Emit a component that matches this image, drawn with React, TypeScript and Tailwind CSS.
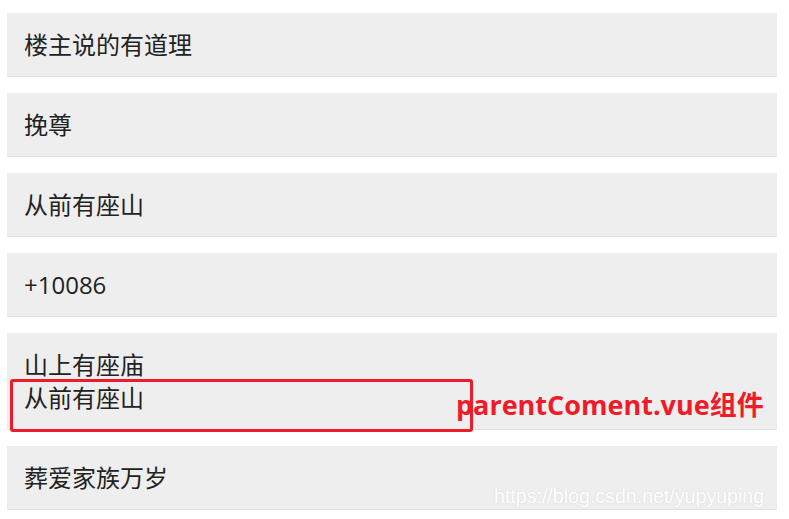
import React from 'react';

const comments: string[][] = [
  ['楼主说的有道理'],
  ['挽尊'],
  ['从前有座山'],
  ['+10086'],
  ['山上有座庙', '从前有座山'],
  ['葬爱家族万岁'],
];

const font = { fontFamily: '"Open Sans", "Noto Sans CJK SC", sans-serif' };

const App: React.FC = () => {
  return (
    <div className="relative w-[789px] h-[519px] bg-white overflow-hidden" style={font}>
      <div className="flex flex-col gap-4 pt-[13px] pl-[7px] w-[777px]">
        {comments.map((lines, i) => (
          <div
            key={i}
            className="bg-[#eeeeee] border-b border-[#e2e2e2] pl-[17px] py-[15px] text-[24px] leading-[33px] text-[#222]"
          >
            {lines.map((l, j) => (
              <div key={j}>{l}</div>
            ))}
          </div>
        ))}
      </div>

      {/* annotation */}
      <div className="absolute left-[10px] top-[379px] w-[463px] h-[53px] border-[3px] border-[#ee1c2a] rounded-[3px]" />
      <div className="absolute left-[456px] top-[388px] text-[27px] leading-[34px] font-bold text-[#ee1c2a] whitespace-nowrap">
        parentComent.vue组件
      </div>

      {/* watermark */}
      <div
        className="absolute left-[494px] top-[483px] text-[19.6px] leading-[26px] text-white whitespace-nowrap"
        style={{ fontFamily: '"Liberation Sans", Arial, sans-serif', textShadow: '0 0 1px #dadada, 0 0 2px #e0e0e0' }}
      >
        https://blog.csdn.net/yupyuping
      </div>
    </div>
  );
};

export default App;
